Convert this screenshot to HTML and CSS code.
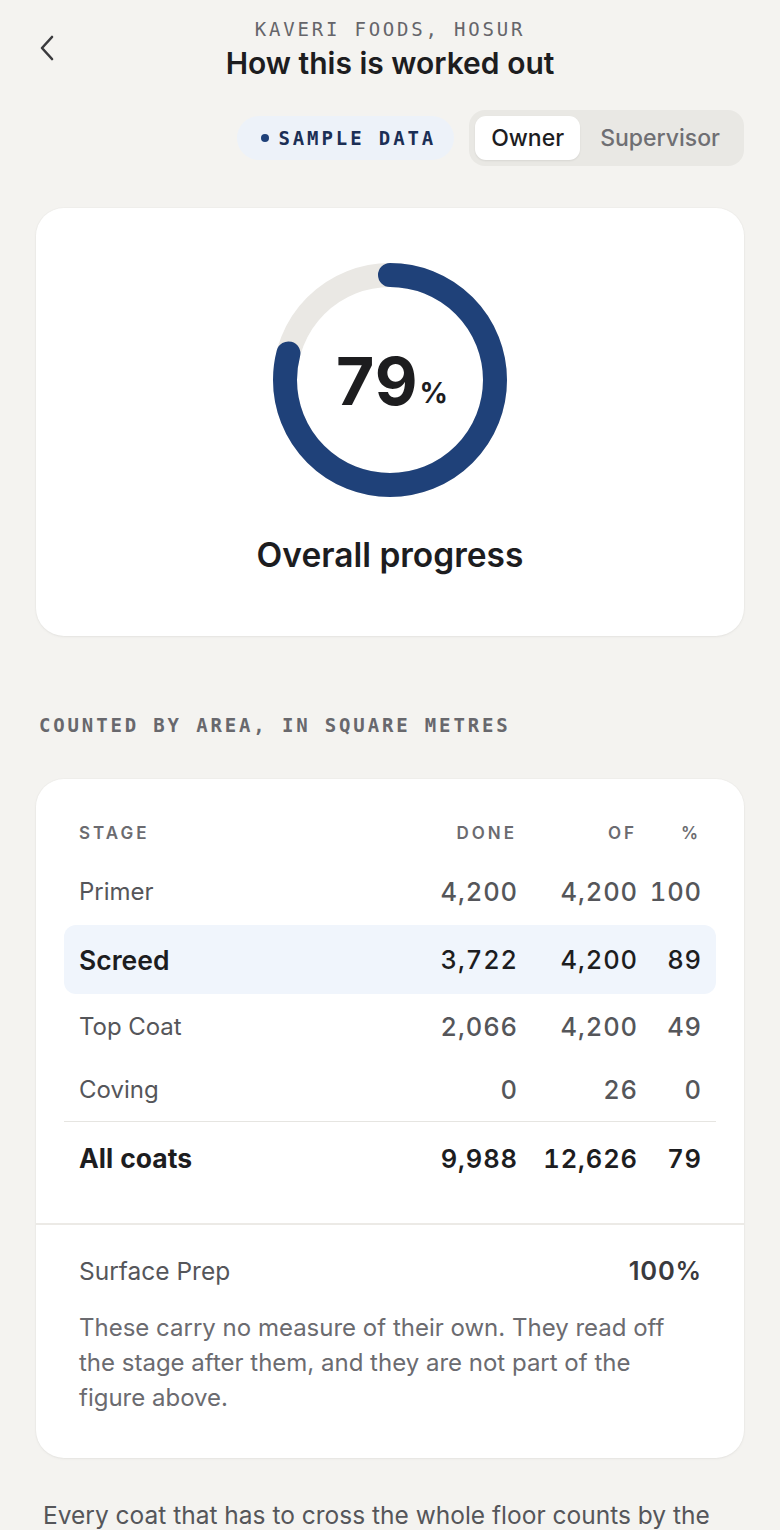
FILE: index.html
```html
<!DOCTYPE html>
<html lang="en">
<head>
<meta charset="utf-8">
<title>How this is worked out</title>
<link rel="stylesheet" href="styles.css">
</head>
<body>
<div class="page">
  <header class="topbar">
    <button class="back" aria-label="Back">
      <svg width="18" height="28" viewBox="0 0 18 28" fill="none"><path d="M14 3 L4 14 L14 25" stroke="#3a3a3d" stroke-width="2.6" stroke-linecap="round" stroke-linejoin="round"/></svg>
    </button>
    <div class="eyebrow">KAVERI FOODS, HOSUR</div>
    <h1 class="title">How this is worked out</h1>
  </header>

  <div class="controls">
    <div class="pill"><span class="dot"></span>SAMPLE DATA</div>
    <div class="segmented">
      <span class="seg active">Owner</span>
      <span class="seg">Supervisor</span>
    </div>
  </div>

  <section class="card hero">
    <div class="ring">
      <svg width="234" height="234" viewBox="0 0 234 234">
        <circle cx="117" cy="117" r="105" fill="none" stroke="#eae8e4" stroke-width="24"/>
        <circle cx="117" cy="117" r="105" fill="none" stroke="#1f4179" stroke-width="24" stroke-linecap="round" stroke-dasharray="521.19 659.73" transform="rotate(-90 117 117)"/>
      </svg>
      <div class="ring-value"><span class="big">79</span><span class="pct">%</span></div>
    </div>
    <div class="hero-label">Overall progress</div>
  </section>

  <div class="section-label">COUNTED BY AREA, IN SQUARE METRES</div>

  <section class="card table-card">
    <div class="table">
      <div class="row head">
        <span class="name">STAGE</span><span class="num">DONE</span><span class="num">OF</span><span class="num">%</span>
      </div>
      <div class="row r-primer">
        <span class="name">Primer</span><span class="num">4,200</span><span class="num">4,200</span><span class="num">100</span>
      </div>
      <div class="row r-screed current">
        <span class="name">Screed</span><span class="num">3,722</span><span class="num">4,200</span><span class="num">89</span>
      </div>
      <div class="row r-top">
        <span class="name">Top Coat</span><span class="num">2,066</span><span class="num">4,200</span><span class="num">49</span>
      </div>
      <div class="row r-coving">
        <span class="name">Coving</span><span class="num">0</span><span class="num">26</span><span class="num">0</span>
      </div>
      <div class="row total">
        <span class="name">All coats</span><span class="num">9,988</span><span class="num">12,626</span><span class="num">79</span>
      </div>
    </div>
    <div class="extra">
      <div class="extra-row"><span>Surface Prep</span><span class="extra-val">100%</span></div>
      <p class="note">These carry no measure of their own. They read off the stage after them, and they are not part of the figure above.</p>
    </div>
  </section>

  <p class="footer-text">Every coat that has to cross the whole floor counts by the area it covers, so a large floor weighs more than a short run of coving.</p>
</div>
</body>
</html>
```

FILE: styles.css
```css
* { box-sizing: border-box; }
html, body { margin: 0; padding: 0; }
body {
  background: #f4f3f0;
  font-family: Inter, "Noto Sans", sans-serif;
  color: #1d1d1f;
  width: 780px;
  overflow: hidden;
}
.page { padding: 0 36px; }

.topbar {
  position: relative;
  text-align: center;
  padding-top: 16px;
}
.back {
  position: absolute;
  left: 2px;
  top: 34px;
  background: none;
  border: 0;
  padding: 0;
  width: 18px;
  height: 28px;
}
.eyebrow {
  font-family: "DejaVu Sans Mono", "Liberation Mono", monospace;
  font-size: 19px;
  letter-spacing: 2.8px;
  line-height: 26px;
  color: #65656a;
}
.title {
  margin: 4px 0 0;
  font-size: 30px;
  line-height: 34px;
  font-weight: 600;
  letter-spacing: 0;
  color: #1d1d1f;
}

.controls {
  display: flex;
  justify-content: flex-end;
  align-items: center;
  gap: 15px;
  margin-top: 30px;
}
.pill {
  display: flex;
  align-items: center;
  gap: 9px;
  height: 44px;
  padding: 0 18px 0 24px;
  background: #edf2f9;
  border-radius: 22px;
  font-family: "DejaVu Sans Mono", "Liberation Mono", monospace;
  font-weight: 700;
  font-size: 19px;
  letter-spacing: 2.9px;
  color: #1b2f55;
}
.dot {
  width: 8px;
  height: 8px;
  border-radius: 50%;
  background: #1f4179;
}
.segmented {
  display: flex;
  padding: 6px;
  background: #e9e8e4;
  border-radius: 16px;
  height: 56px;
}
.seg {
  display: flex;
  align-items: center;
  padding: 0 16px;
  font-size: 23px;
  font-weight: 500;
  color: #6f6f73;
  border-radius: 11px;
}
.seg + .seg { padding: 0 18px 0 20px; }
.seg.active {
  background: #fff;
  color: #1d1d1f;
  box-shadow: 0 1px 2px rgba(0,0,0,0.08);
}

.card {
  background: #fff;
  border-radius: 28px;
  box-shadow: 0 1px 3px rgba(0,0,0,0.05), 0 0 0 1px rgba(0,0,0,0.015);
}
.hero {
  margin-top: 42px;
  height: 428px;
  padding-top: 55px;
  display: flex;
  flex-direction: column;
  align-items: center;
}
.ring {
  position: relative;
  width: 234px;
  height: 234px;
}
.ring svg { display: block; }
.ring-value {
  position: absolute;
  inset: 0;
  display: flex;
  align-items: center;
  justify-content: center;
  padding-left: 4px;
  padding-top: 2px;
}
.big {
  font-size: 66px;
  font-weight: 700;
  letter-spacing: 1px;
  line-height: 1;
}
.pct {
  font-size: 28px;
  font-weight: 700;
  margin-left: 1px;
  margin-top: 24px;
}
.hero-label {
  margin-top: 38px;
  font-size: 33.5px;
  line-height: 40px;
  font-weight: 600;
}

.section-label {
  margin-top: 79px;
  padding-left: 3px;
  font-family: "DejaVu Sans Mono", "Liberation Mono", monospace;
  font-size: 19px;
  font-weight: 700;
  letter-spacing: 2.85px;
  line-height: 20px;
  color: #68686d;
}

.table-card {
  margin-top: 44px;
}
.table {
  padding: 29px 28px 29px;
}
.row {
  display: grid;
  grid-template-columns: 1fr 120px 120px 64px;
  align-items: center;
  padding: 0 15px;
  font-size: 24px;
  color: #55565a;
  font-variant-numeric: tabular-nums;
}
.row .num {
  text-align: right;
  font-weight: 500;
  font-size: 25.5px;
  letter-spacing: 0.9px;
  margin-right: -1px;
}
.row.head {
  height: 50px;
  font-size: 17px;
  font-weight: 600;
  letter-spacing: 3px;
  color: #6b6b70;
}
.row.head .num { font-size: 17px; font-weight: 600; letter-spacing: 3px; margin-right: 0; }
.r-primer { height: 67px; }
.r-screed { height: 69px; }
.r-top { height: 64px; }
.r-coving { height: 64px; border-bottom: 1px solid #e6e5e1; }
.row.current {
  background: #f0f5fc;
  border-radius: 12px;
  color: #1d1d1f;
}
.row.current .name { font-weight: 600; font-size: 26.5px; }
.row.total {
  height: 72px;
  color: #1d1d1f;
}
.row.total .name { font-weight: 700; font-size: 26.5px; }
.row.total .num { font-weight: 600; }

.extra {
  border-top: 2px solid #eceae6;
  padding: 30px 43px 43px;
}
.extra-row {
  display: flex;
  justify-content: space-between;
  font-size: 24.5px;
  line-height: 32px;
  color: #55565a;
}
.extra-val { font-weight: 600; font-size: 25.5px; color: #3a3a3e; letter-spacing: 0.8px; margin-right: -1px; }
.note {
  margin: 23px 0 0;
  font-size: 24px;
  line-height: 35px;
  color: #6b6b70;
}

.footer-text {
  margin: 40px 0 0;
  padding-left: 7px;
  font-size: 24.5px;
  line-height: 35px;
  color: #55565a;
}
```
